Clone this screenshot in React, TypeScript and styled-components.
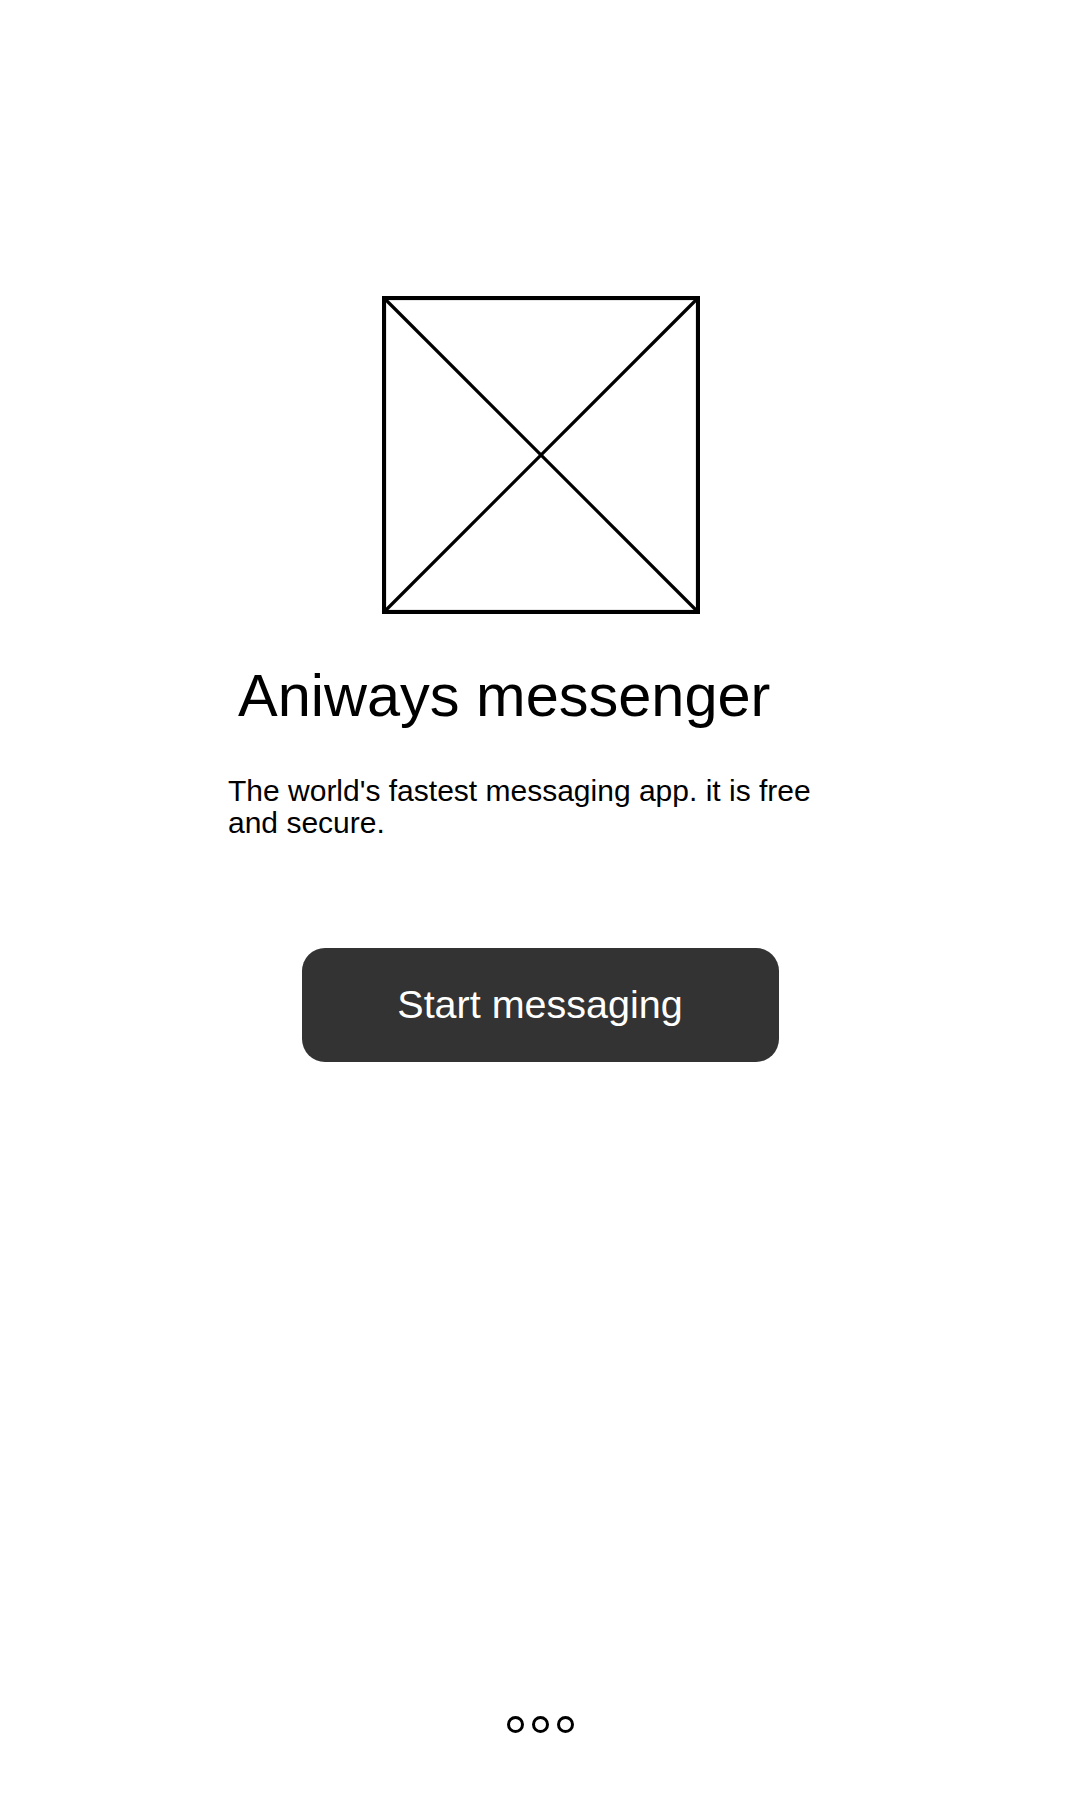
import React from "react";
import styled, { createGlobalStyle } from "styled-components";

const GlobalStyle = createGlobalStyle`
  html, body {
    margin: 0;
    padding: 0;
    background: #ffffff;
  }
  body {
    font-family: "Liberation Sans", Arial, sans-serif;
    color: #000000;
  }
`;

const Screen = styled.div`
  width: 1080px;
  min-height: 1800px;
  display: flex;
  flex-direction: column;
  align-items: center;
  box-sizing: border-box;
  padding-top: 296px;
  padding-bottom: 67px;
`;

const Content = styled.div`
  width: 624px;
  display: flex;
  flex-direction: column;
  align-items: center;
`;

const Placeholder = styled.svg`
  display: block;
  width: 318px;
  height: 318px;
  margin-left: 2px;
`;

const Title = styled.h1`
  align-self: stretch;
  margin: 52px 0 0;
  padding-left: 10px;
  font-size: 59.5px;
  font-weight: 400;
  line-height: 1;
`;

const Description = styled.p`
  align-self: stretch;
  margin: 49px 0 0;
  font-size: 30px;
  line-height: 32px;
`;

const StartButton = styled.button`
  margin-top: 109px;
  width: 477px;
  height: 114px;
  border: none;
  border-radius: 23px;
  background: #333333;
  color: #ffffff;
  font-family: "Liberation Sans", Arial, sans-serif;
  font-size: 39.5px;
  cursor: pointer;
`;

const Dots = styled.div`
  margin-top: auto;
  display: flex;
  gap: 8px;
`;

const Dot = styled.span`
  width: 17px;
  height: 17px;
  box-sizing: border-box;
  border: 3px solid #000000;
  border-radius: 50%;
`;

function ImagePlaceholder() {
  return (
    <Placeholder viewBox="0 0 318 318">
      <line x1="2" y1="2" x2="316" y2="316" stroke="#000" strokeWidth="3.2" />
      <line x1="316" y1="2" x2="2" y2="316" stroke="#000" strokeWidth="3.2" />
      <rect x="2" y="2" width="314" height="314" fill="none" stroke="#000" strokeWidth="4.2" />
    </Placeholder>
  );
}

export default function App() {
  return (
    <>
      <GlobalStyle />
      <Screen>
        <Content>
          <ImagePlaceholder />
          <Title>Aniways messenger</Title>
          <Description>
            The world's fastest messaging app. it is free and secure.
          </Description>
          <StartButton>Start messaging</StartButton>
        </Content>
        <Dots>
          <Dot />
          <Dot />
          <Dot />
        </Dots>
      </Screen>
    </>
  );
}
